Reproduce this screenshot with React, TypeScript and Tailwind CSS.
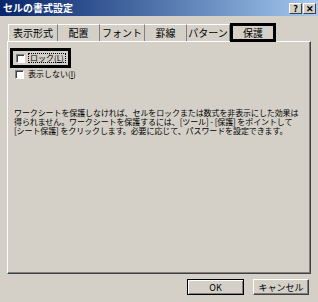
import React from 'react';

const tabs = ['表示形式', '配置', 'フォント', '罫線', 'パターン'];

function Check({ label }: { label: React.ReactNode }) {
  return (
    <div className="flex items-center gap-[4px] h-[14px] whitespace-nowrap">
      <span className="shrink-0 w-[9px] h-[9px] bg-white border-t border-l border-[#808080] border-r border-b border-r-white border-b-white shadow-[inset_1px_1px_0_#404040]" />
      {label}
    </div>
  );
}

export default function App() {
  return (
    <div
      className="w-[318px] h-[302px] bg-[#d4d0c8] overflow-hidden text-black flex flex-col"
      style={{ fontFamily: '"Noto Sans CJK JP", "Liberation Sans", sans-serif' }}
    >
      {/* Title bar */}
      <div className="h-[16px] flex items-center justify-between bg-gradient-to-r from-[#0a246a] to-[#a6caf0] pl-[3px] pr-[2px]">
        <span className="text-white font-bold text-[10px] leading-none">セルの書式設定</span>
        <div className="flex gap-[1px]">
          <span className="w-[13px] h-[11px] bg-[#d4d0c8] border border-t-white border-l-white border-r-[#404040] border-b-[#404040] text-[9px] font-bold leading-[9px] text-center">?</span>
          <span className="w-[13px] h-[11px] bg-[#d4d0c8] border border-t-white border-l-white border-r-[#404040] border-b-[#404040] text-[9px] font-bold leading-[9px] text-center">✕</span>
        </div>
      </div>

      {/* Tabs */}
      <div className="flex items-end pl-[8px] mt-[7px] h-[18px]">
        {tabs.map((t, i) => (
          <div
            key={t}
            className={`h-[17px] flex items-center justify-center text-[10px] leading-none border-t border-t-white border-r border-r-[#808080] ${i === 0 ? 'border-l border-l-white' : ''}`}
            style={{ width: [50, 42, 45, 42, 43][i] }}
          >
            {t}
          </div>
        ))}
        <div className="w-[46px] h-[19px] -mb-[1px] flex items-center justify-center text-[10px] leading-none border-[3px] border-black bg-[#d4d0c8] z-10">
          保護
        </div>
      </div>

      {/* Panel */}
      <div className="ml-[7px] w-[304px] h-[233px] border-t border-l border-white border-r border-b border-r-[#404040] border-b-[#404040] shadow-[inset_-1px_-1px_0_#808080] pt-[6px] pl-[2px]">
        <div className="w-[61px] h-[20px] border-[3px] border-black pl-[3px] flex items-center">
          <Check label={<span className="text-[8px] leading-none outline outline-1 outline-dotted outline-black px-[1px]">ロック(<u>L</u>)</span>} />
        </div>
        <div className="pl-[5px] -mt-[1px]">
          <Check label={<span className="text-[8px] leading-none">表示しない(<u>I</u>)</span>} />
        </div>
        <p className="mt-[27px] pl-[4px] pr-[8px] text-[8px] leading-[9px] tracking-[-0.1px]">
          ワークシートを保護しなければ、セルをロックまたは数式を非表示にした効果は得られません。ワークシートを保護するには、[ツール] - [保護] をポイントして [シート保護] をクリックします。必要に応じて、パスワードを設定できます。
        </p>
      </div>

      {/* Buttons */}
      <div className="flex justify-end gap-[9px] pr-[9px] mt-[5px]">
        <button className="w-[57px] h-[16px] border border-black bg-[#d4d0c8] text-[9px] leading-none shadow-[inset_1px_1px_0_white,inset_-1px_-1px_0_#808080]">
          OK
        </button>
        <button className="w-[56px] h-[16px] border border-t-white border-l-white border-r-[#404040] border-b-[#404040] bg-[#d4d0c8] text-[9px] leading-none shadow-[inset_-1px_-1px_0_#808080]">
          キャンセル
        </button>
      </div>
    </div>
  );
}
